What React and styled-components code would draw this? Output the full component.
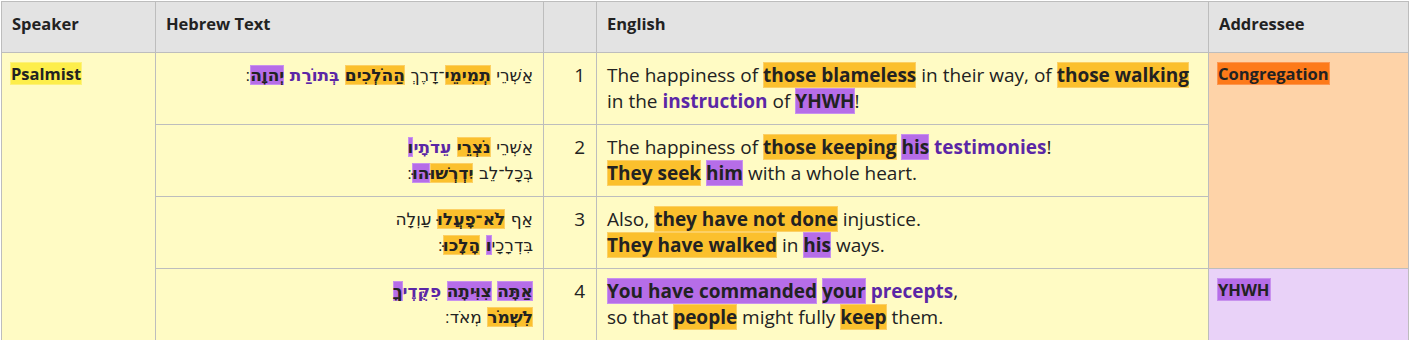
import React from "react";
import styled, { createGlobalStyle } from "styled-components";

const GlobalStyle = createGlobalStyle`
  body {
    margin: 0;
    background: #ffffff;
    font-family: "Open Sans", "Noto Sans", sans-serif;
    color: #222222;
  }
`;

const tones = {
  gold: { bg: "#fbc02d", edge: "#fcd064" },
  purple: { bg: "#b66de8", edge: "#c891ee" },
  yellow: { bg: "#fdee4b", edge: "#fdf27a" },
  orange: { bg: "#fd7a1a", edge: "#fd9650" },
};

const Page = styled.div`
  padding: 1px 0 0 1px;
`;

const Table = styled.table`
  width: 1407px;
  table-layout: fixed;
  border-collapse: collapse;
  background: #fffbc4;
`;

const Head = styled.th`
  height: 42px;
  padding: 0 10px 8px;
  text-align: left;
  font-size: 16.5px;
  font-weight: 700;
  color: #222222;
  background: #e3e3e3;
  border: 1px solid #bdbdbd;
`;

const Cell = styled.td`
  vertical-align: top;
  padding: 9px 10px 10px;
  font-size: 19px;
  line-height: 26px;
  border: 1px solid #bdbdbd;
  background: ${({ $bg }) => $bg || "#fffbc4"};
`;

const RoleCell = styled(Cell)`
  padding: 7px 8px;
`;

const Hebrew = styled(Cell)`
  text-align: right;
  font-family: "DejaVu Sans", "Liberation Sans", sans-serif;
  font-size: 17px;
`;

const Num = styled(Cell)`
  text-align: right;
  padding-right: 11px;
`;

const Role = styled.span`
  font-size: 16.5px;
  font-weight: 700;
  line-height: 22px;
  padding: 0 1px;
  background: ${({ $tone }) => tones[$tone].bg};
  box-shadow: inset 0 0 0 1px ${({ $tone }) => tones[$tone].edge};
`;

const Mark = styled.span`
  font-weight: 700;
  background: ${({ $tone }) => tones[$tone].bg};
  box-shadow: inset 0 0 0 1px ${({ $tone }) => tones[$tone].edge};
`;

const Term = styled.span`
  font-weight: 700;
  color: #5b27a6;
`;

const App = () => {
  return (
    <Page>
      <GlobalStyle />
      <Table>
        <colgroup>
          <col style={{ width: 154 }} />
          <col style={{ width: 388 }} />
          <col style={{ width: 53 }} />
          <col style={{ width: 612 }} />
          <col style={{ width: 200 }} />
        </colgroup>
        <thead>
          <tr>
            <Head>Speaker</Head>
            <Head>Hebrew Text</Head>
            <Head></Head>
            <Head>English</Head>
            <Head>Addressee</Head>
          </tr>
        </thead>
        <tbody>
          <tr>
            <RoleCell rowSpan={4}>
              <Role $tone="yellow">Psalmist</Role>
            </RoleCell>
            <Hebrew dir="rtl">
              אַשְׁרֵי <Mark $tone="gold">תְמִימֵי</Mark>־דָרֶךְ{" "}
              <Mark $tone="gold">הַהֹלְכִים</Mark> <Term>בְּתוֹרַת</Term>{" "}
              <Mark $tone="purple">יְהוָה</Mark>׃
            </Hebrew>
            <Num>1</Num>
            <Cell>
              The happiness of <Mark $tone="gold">those blameless</Mark> in
              their way, of <Mark $tone="gold">those walking</Mark>
              <br />
              in the <Term>instruction</Term> of <Mark $tone="purple">YHWH</Mark>!
            </Cell>
            <RoleCell rowSpan={3} $bg="#fed3a8">
              <Role $tone="orange">Congregation</Role>
            </RoleCell>
          </tr>
          <tr>
            <Hebrew dir="rtl">
              אַשְׁרֵי <Mark $tone="gold">נֹצְרֵי</Mark> <Term>עֵדֹתָי</Term>
              <Mark $tone="purple">ו</Mark>
              <br />
              בְּכָל־לֵב <Mark $tone="gold">יִדְרְשׁוּ</Mark>
              <Mark $tone="purple">הוּ</Mark>׃
            </Hebrew>
            <Num>2</Num>
            <Cell>
              The happiness of <Mark $tone="gold">those keeping</Mark>{" "}
              <Mark $tone="purple">his</Mark> <Term>testimonies</Term>!
              <br />
              <Mark $tone="gold">They seek</Mark> <Mark $tone="purple">him</Mark>{" "}
              with a whole heart.
            </Cell>
          </tr>
          <tr>
            <Hebrew dir="rtl">
              אַף <Mark $tone="gold">לֹא־פָעֲלוּ</Mark> עַוְלָה
              <br />
              בִּדְרָכָי<Mark $tone="purple">ו</Mark>{" "}
              <Mark $tone="gold">הָלָכוּ</Mark>׃
            </Hebrew>
            <Num>3</Num>
            <Cell>
              Also, <Mark $tone="gold">they have not done</Mark> injustice.
              <br />
              <Mark $tone="gold">They have walked</Mark> in{" "}
              <Mark $tone="purple">his</Mark> ways.
            </Cell>
          </tr>
          <tr>
            <Hebrew dir="rtl">
              <Mark $tone="purple">אַתָּה</Mark>{" "}
              <Mark $tone="purple">צִוִּיתָה</Mark> <Term>פִקֻּדֶי</Term>
              <Mark $tone="purple">ךָ</Mark>
              <br />
              <Mark $tone="gold">לִשְׁמֹר</Mark> מְאֹד׃
            </Hebrew>
            <Num>4</Num>
            <Cell>
              <Mark $tone="purple">You have commanded</Mark>{" "}
              <Mark $tone="purple">your</Mark> <Term>precepts</Term>,
              <br />
              so that <Mark $tone="gold">people</Mark> might fully{" "}
              <Mark $tone="gold">keep</Mark> them.
            </Cell>
            <RoleCell $bg="#e9d2f8">
              <Role $tone="purple">YHWH</Role>
            </RoleCell>
          </tr>
        </tbody>
      </Table>
    </Page>
  );
};

export default App;
